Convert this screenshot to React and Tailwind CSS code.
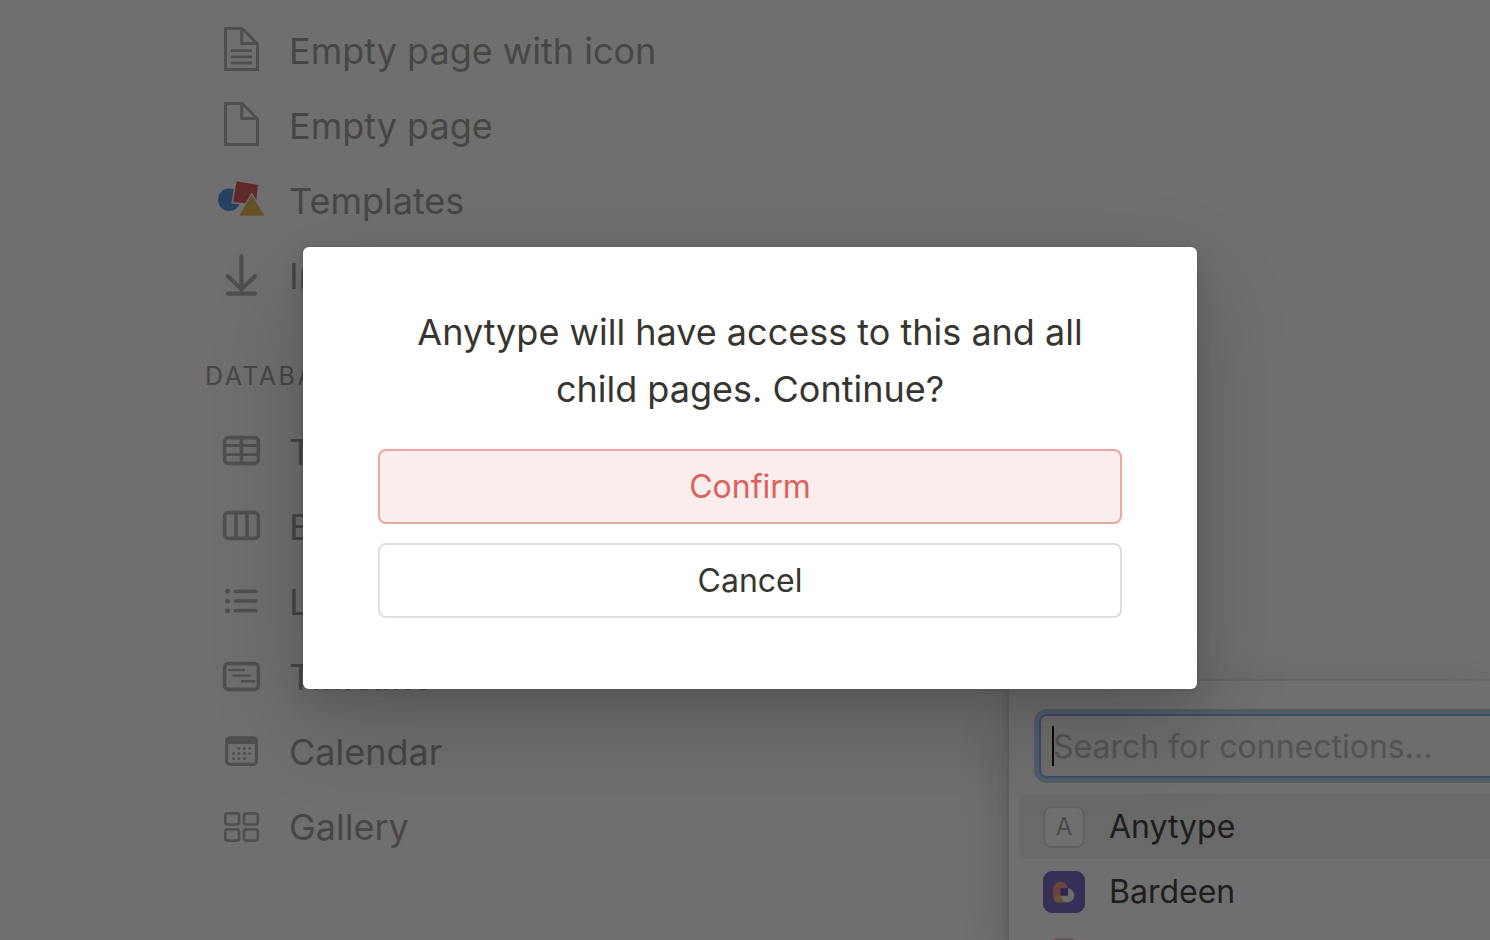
import React from "react";

const Svg = ({ children }) => (
  <svg
    viewBox="0 0 48 47"
    className="h-[47px] w-12 shrink-0 text-[#b0afac]"
    fill="none"
    stroke="currentColor"
    strokeWidth="3"
    aria-hidden="true"
  >
    {children}
  </svg>
);

const pageOutline = (
  <>
    <path d="M8.5 1.5H25.2L40.5 16.8V42.5H8.5Z" />
    <path d="M24.7 1.5V16.6H40.5" />
  </>
);

const dots = [
  [21.9, 20.4], [27.3, 20.4], [32.8, 20.4],
  [16.5, 25.6], [21.9, 25.6], [27.3, 25.6], [32.8, 25.6],
  [16.5, 30.6], [21.9, 30.6], [27.3, 30.6],
];

const icons = {
  pageText: (
    <Svg>
      {pageOutline}
      <path d="M13.5 23.7H35M13.5 29.8H35M13.5 36H35" strokeWidth="2.8" />
    </Svg>
  ),
  page: <Svg>{pageOutline}</Svg>,
  templates: (
    <Svg>
      <circle cx="12.2" cy="22.8" r="11.2" fill="#4a90d9" stroke="none" />
      <path d="M19 3.6L41.8 7.2L39.4 28.2L15.2 25.8Z" fill="#d65257" stroke="#fff" strokeWidth="1.4" />
      <path d="M34.7 16.6L48.4 39.4H21Z" fill="#e8b547" stroke="#fff" strokeWidth="1.2" />
    </Svg>
  ),
  download: (
    <Svg>
      <path d="M24.4 4V37M10.8 24.2L24.4 37.2L38 24.2M11 41.7H38" strokeWidth="4.2" strokeLinecap="round" />
    </Svg>
  ),
  table: (
    <Svg>
      <rect x="7.6" y="9.6" width="33.8" height="25.8" rx="3.6" strokeWidth="3.6" />
      <path d="M7 17.5H42M7 26.7H42" strokeWidth="2.8" />
      <path d="M24.4 9V36" strokeWidth="3.8" />
    </Svg>
  ),
  board: (
    <Svg>
      <rect x="7.6" y="9.6" width="33.8" height="25.8" rx="3.6" strokeWidth="3.6" />
      <path d="M19 9V36M30 9V36" strokeWidth="3.6" />
    </Svg>
  ),
  list: (
    <Svg>
      <path d="M18.6 13.3H39M18.6 23H39M18.6 32.7H39" strokeWidth="3.7" strokeLinecap="round" />
      <g fill="currentColor" stroke="none">
        <circle cx="10.5" cy="13.3" r="2.5" />
        <circle cx="10.5" cy="23" r="2.5" />
        <circle cx="10.5" cy="32.7" r="2.5" />
      </g>
    </Svg>
  ),
  timeline: (
    <Svg>
      <rect x="7.6" y="10.6" width="33.8" height="25.8" rx="3.6" strokeWidth="3.6" />
      <path d="M12 17H26.8M16.5 22.6H32.6M25.2 28.3H37.2" strokeWidth="2.4" strokeLinecap="round" />
    </Svg>
  ),
  calendar: (
    <Svg>
      <rect x="9.6" y="9.8" width="29.8" height="26.6" rx="3.4" strokeWidth="3.2" />
      <path d="M8.5 16V12Q8.5 9 12 9H37Q40.5 9 40.5 12V16Z" fill="currentColor" stroke="none" />
      <g fill="currentColor" stroke="none">
        {dots.map(([x, y]) => (
          <circle key={`${x}-${y}`} cx={x} cy={y} r="1.5" />
        ))}
      </g>
    </Svg>
  ),
  gallery: (
    <Svg>
      <g strokeWidth="2.7">
        <rect x="8.3" y="10.3" width="13.8" height="11.2" rx="2.4" />
        <rect x="27" y="10.3" width="13.8" height="11.2" rx="2.4" />
        <rect x="8.3" y="26.4" width="13.8" height="11.2" rx="2.4" />
        <rect x="27" y="26.4" width="13.8" height="11.2" rx="2.4" />
      </g>
    </Svg>
  ),
};

const pageItems = [
  ["pageText", "Empty page with icon"],
  ["page", "Empty page"],
  ["templates", "Templates"],
  ["download", "Import"],
];

const databaseItems = [
  ["table", "Table"],
  ["board", "Board"],
  ["list", "List"],
  ["timeline", "Timeline"],
  ["calendar", "Calendar"],
  ["gallery", "Gallery"],
];

function ItemList({ items }) {
  return (
    <ul>
      {items.map(([icon, label]) => (
        <li key={label}>
          <button type="button" className="flex h-[75px] w-full items-center gap-6 text-left text-4xl text-[#9b9a97]">
            {icons[icon]}
            {label}
          </button>
        </li>
      ))}
    </ul>
  );
}

function Connections() {
  return (
    <section
      aria-label="Connections"
      className="absolute right-0 bottom-0 h-[259px] w-[481px] overflow-hidden rounded-tl-md bg-white shadow-[0_0_0_2px_rgba(15,15,15,0.05),0_7px_14px_rgba(15,15,15,0.1),0_21px_56px_rgba(15,15,15,0.2)]"
    >
      <div className="relative mt-[33px] ml-[30px]">
        <input
          type="text"
          aria-label="Search for connections"
          placeholder="Search for connections..."
          className="block h-16 w-[520px] rounded-lg border-2 border-[#7ea9e6] bg-[#faf9f8] px-3 text-[32px] text-[#37352f] ring-[5px] ring-[#b9cdea] outline-none placeholder:text-[#b9b8b4] placeholder:opacity-100"
        />
        <span className="absolute top-3 left-[13px] h-10 w-0.5 bg-black" />
      </div>
      <ul className="mt-4 w-[520px] pl-2.5 text-[32px] text-[#37352f]">
        <li>
          <button type="button" className="flex h-[65px] w-full items-center gap-6 rounded-lg bg-[#efefef] pl-6 text-left">
            <span className="flex size-[42px] items-center justify-center rounded-[9px] border-2 border-[#dcdcda] bg-white text-2xl text-[#a3a29e]">
              A
            </span>
            Anytype
          </button>
        </li>
        <li>
          <button type="button" className="flex h-[66px] w-full items-center gap-6 pl-6 text-left">
            <svg viewBox="0 0 42 42" className="size-[42px]" aria-hidden="true">
              <rect width="42" height="42" rx="9" fill="#7262c2" />
              <path d="M10.500 18V27Q11 31.500 16 31.500H24L18 22Z" fill="#f0b95c" />
              <path d="M10.500 26V17.500A7 7 0 0 1 24.500 17.500H18V24.500Q12 24 10.500 26Z" fill="#f09482" />
              <path d="M25 17.300A7.200 7.200 0 0 1 24.800 31.600Q18.800 31 17.800 24.500H25Z" fill="#f4f2f8" />
              <rect x="17.500" y="17.300" width="7.500" height="7.200" fill="#5b46b8" />
            </svg>
            Bardeen
          </button>
        </li>
        <li className="flex pt-3 pl-6">
          <svg viewBox="0 0 42 42" className="size-[42px]" aria-hidden="true">
            <rect x="10" y="1" width="22" height="22" rx="4" fill="#e8c4cc" />
          </svg>
        </li>
      </ul>
    </section>
  );
}

export default function App() {
  return (
    <div className="relative min-h-screen overflow-hidden bg-white font-['Inter','Liberation_Sans',sans-serif]">
      <main className="pt-[13px] pl-[217px]">
        <ItemList items={pageItems} />
        <h2 className="-ml-3 flex h-[101px] items-end pb-[19px] text-[25px] tracking-widest text-[#9b9a97] uppercase">
          Database
        </h2>
        <ItemList items={databaseItems} />
      </main>
      <Connections />
      <div className="absolute inset-0 flex items-center justify-center bg-[rgba(15,15,15,0.6)] pb-1 pl-2.5">
        <div
          role="dialog"
          aria-modal="true"
          aria-labelledby="dialog-text"
          className="flex w-full max-w-[894px] flex-col rounded-md bg-white px-[75px] pt-[57px] pb-[71px] shadow-[0_0_0_2px_rgba(15,15,15,0.05),0_12px_24px_rgba(15,15,15,0.1),0_35px_94px_rgba(15,15,15,0.2)]"
        >
          <p id="dialog-text" className="text-center text-4xl leading-[57px] text-[#37352f]">
            Anytype will have access to this and all child pages. Continue?
          </p>
          <div className="mt-[31px] flex flex-col gap-[19px] text-[32px]">
            <button type="button" className="h-[75px] rounded-lg border-2 border-[#eda7a3] bg-[#faeeec] text-[#de5f5b]">
              Confirm
            </button>
            <button type="button" className="h-[75px] rounded-lg border-2 border-[#dededd] bg-white text-[#37352f]">
              Cancel
            </button>
          </div>
        </div>
      </div>
    </div>
  );
}
